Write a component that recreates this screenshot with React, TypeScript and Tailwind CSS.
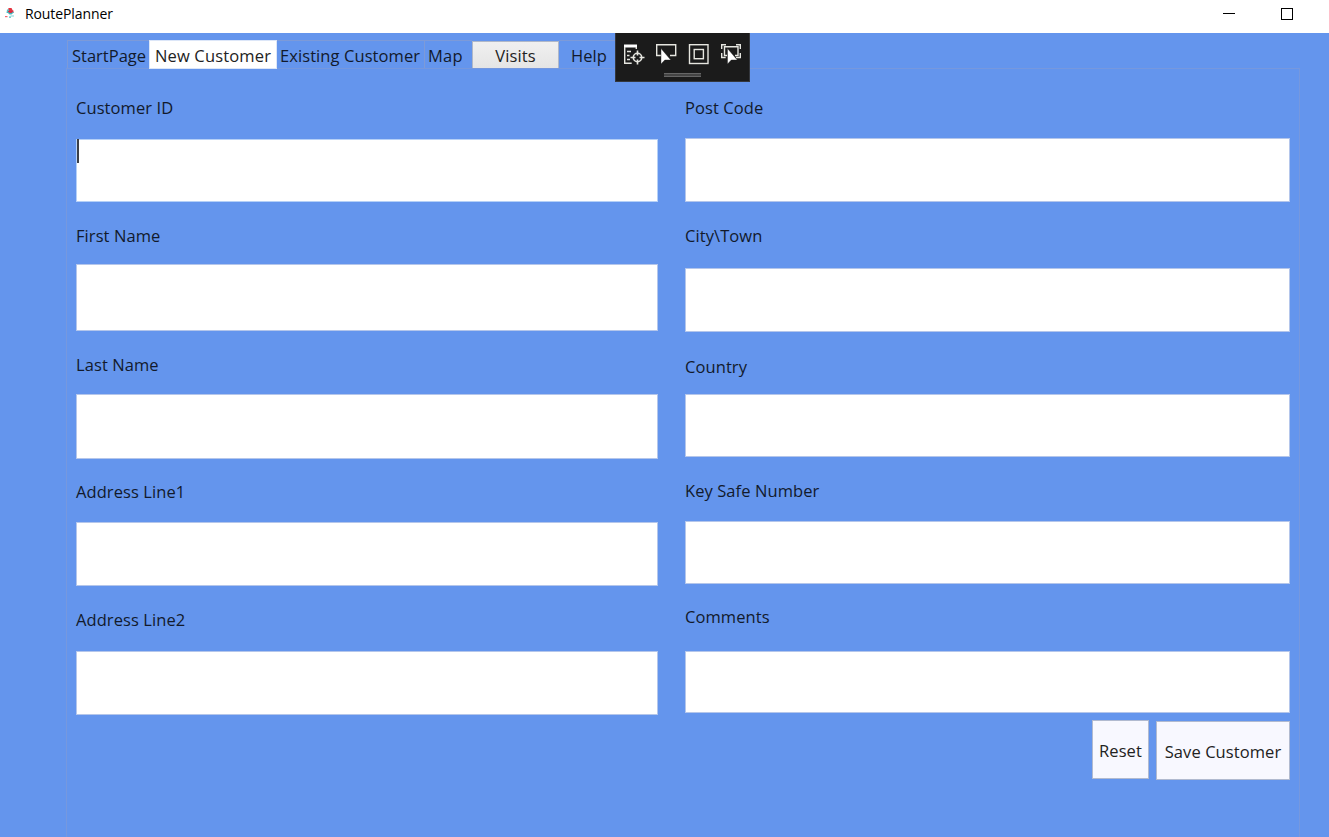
type FieldProps = {
  label: string;
  labelClass: string;
  boxClass: string;
  focused?: boolean;
};

const leftFields: FieldProps[] = [
  { label: "Customer ID", labelClass: "mt-[27px] mb-[19px]", boxClass: "h-[63px] border-[#b5d0f7]", focused: true },
  { label: "First Name", labelClass: "mt-[22px] mb-4", boxClass: "h-[67px] border-[#b4c6eb]" },
  { label: "Last Name", labelClass: "mt-[22px] mb-[17px]", boxClass: "h-[65px] border-[#b4c6eb]" },
  { label: "Address Line1", labelClass: "mt-[21px] mb-[18px]", boxClass: "h-16 border-[#b4c6eb]" },
  { label: "Address Line2", labelClass: "mt-[22px] mb-[19px]", boxClass: "h-16 border-[#b4c6eb]" },
];

const rightFields: FieldProps[] = [
  { label: "Post Code", labelClass: "mt-[27px] mb-[18px]", boxClass: "h-16 border-[#b4c6eb]" },
  { label: "City\\Town", labelClass: "mt-[22px] mb-5", boxClass: "h-16 border-[#b4c6eb]" },
  { label: "Country", labelClass: "mt-[23px] mb-[15px]", boxClass: "h-[63px] border-[#b4c6eb]" },
  { label: "Key Safe Number", labelClass: "mt-[22px] mb-[18px]", boxClass: "h-[63px] border-[#b4c6eb]" },
  { label: "Comments", labelClass: "mt-[21px] mb-[22px]", boxClass: "h-[62px] border-[#b4c6eb]" },
];

function Field({ label, labelClass, boxClass, focused }: FieldProps) {
  return (
    <div className="flex flex-col">
      <div className={`h-6 whitespace-nowrap leading-6 ${labelClass}`}>{label}</div>
      <div className={`border bg-white ${boxClass}`}>
        {focused && <div className="-mt-px h-6 w-[2px] bg-[#3c3f46]" />}
      </div>
    </div>
  );
}

function Logo() {
  return (
    <svg className="h-[14px] w-[12px]" viewBox="0 0 12 14" fill="none">
      <path d="M4.500 1h3L9 4H4z" fill="#e5323e" />
      <path d="M3 2.500h2v3.500H2.500z" fill="#55c0c4" />
      <path d="M8 3.500h1.500v2.500H8z" fill="#c93f4c" />
      <path d="M4 4h4.500v2H4z" fill="#d92c40" />
      <path d="M3 5h1.800l.7 1h2L8.500 5H10L7.500 7.500h-2z" fill="#3fb8bd" />
      <path d="M1 9h2.500v1.200H1z" fill="#ef6a72" />
      <path d="M6.500 8.500H10v1H6.500z" fill="#7fd3d4" />
      <path d="M5 9.500h2v1.200H5z" fill="#48c5c6" />
    </svg>
  );
}

function DebugToolbar() {
  return (
    <div className="absolute left-[615px] top-0 h-[49px] w-[135px] border border-t-0 border-[#34373d] bg-[#1b1b1b]">
      <svg className="h-12 w-[133px]" viewBox="1 0 133 48" fill="none" stroke="#e6e6e0" strokeWidth="1.4">
        <path d="M9 11.500h13v3H9z" fill="#fff" stroke="none" />
        <path d="M9.700 14v16.300h7M21.300 14v2" />
        <path d="M12 18.500h4M12 22.500h2.500M12 26.500h3" />
        <circle cx="22.500" cy="24.500" r="4.200" strokeWidth="1.6" />
        <path d="M22.500 17.500v5M22.500 26.500v5M15.500 24.500h5M24.500 24.500h5" strokeWidth="1.6" />
        <path d="M46 22.500h-4.300V11.700h19v10.800H55" />
        <path d="M46 15.500v15.500l3.800-4h6z" fill="#fff" stroke="#1b1b1b" strokeWidth=".4" />
        <rect x="74.500" y="11.700" width="18.500" height="18.800" />
        <rect x="79.200" y="16.500" width="9.200" height="9.200" />
        <path d="M111 11.700h-4.300V16M121 11.700h4.300V16M106.700 20v4.500h4M125.300 20v4.500H121" />
        <path d="M112 22.500h-2.500v-8.800h13.500v8.800h-3" />
        <path d="M112.500 15.500V31l3.800-4h6z" fill="#fff" stroke="#1b1b1b" strokeWidth=".4" />
        <path d="M49 42h37" stroke="#444" strokeWidth="4" />
        <path d="M49 40.500h37M49 43.500h37" stroke="#666" strokeWidth="1" />
      </svg>
    </div>
  );
}

export default function App() {
  return (
    <div className="flex h-[837px] w-[1329px] flex-col overflow-hidden bg-[#6495ed] font-['Open_Sans',sans-serif] text-[16.500px] tracking-[0.08px] text-[#121a2c]">
      <header className="flex h-[33px] shrink-0 items-start bg-white text-black">
        <div className="ml-1 mt-[7px]"><Logo /></div>
        <div className="ml-[9px] mt-[4px] text-[14px] leading-5 tracking-[-0.1px]">RoutePlanner</div>
        <div className="ml-auto mr-[46px] mt-[13px] h-px w-3 bg-black" />
        <div className="mr-9 mt-2 size-3 border border-black" />
      </header>

      <main className="relative flex min-h-0 flex-1 flex-col pl-[66px] pr-[29px] pt-[7px]">
        <DebugToolbar />
        <nav className="flex h-7 shrink-0 items-end pl-px leading-[29px]">
          <div className="h-7 w-[82px] whitespace-nowrap border-l border-t border-[#7d9ad8] pl-1 tracking-[0px]">StartPage</div>
          <div className="z-10 -mb-px h-[29px] w-[128px] whitespace-nowrap border border-[#dce6f8] bg-white pl-[5px] text-[#222] tracking-[0.15px]">New Customer</div>
          <div className="h-7 w-[148px] whitespace-nowrap border-r border-t border-[#7d9ad8] pl-[3px]">Existing Customer</div>
          <div className="h-7 w-[47px] border-t border-[#7d9ad8] pl-[3px] tracking-[0.2px]">Map</div>
          <div className="-mb-px h-[28px] w-[87px] border border-[#b0b8c8] bg-linear-to-b from-[#f0f0f0] to-[#e5e5e5] text-center leading-[27px] text-[#222]">Visits</div>
          <div className="h-7 w-[60px] border-t border-[#7d9ad8] pl-3">Help</div>
        </nav>
        <section className="flex min-h-0 flex-1 flex-col border border-b-0 border-[#7698de]">
          <div className="flex pl-[9px]">
            <div className="w-[582px]">
              {leftFields.map((field) => <Field key={field.label} {...field} />)}
            </div>
            <div className="ml-[27px] w-[605px]">
              {rightFields.map((field) => <Field key={field.label} {...field} />)}
              <div className="mt-[7px] flex items-start justify-end gap-[7px] text-[#222]">
                <div className="flex h-[59px] w-[57px] items-center justify-center border border-[#b1bad0] bg-[#f8f8ff] pt-1">Reset</div>
                <div className="mt-px flex h-[59px] w-[134px] items-center justify-center whitespace-nowrap border border-[#b1bad0] bg-[#f8f8ff] pt-1">Save Customer</div>
              </div>
            </div>
          </div>
        </section>
      </main>
    </div>
  );
}
